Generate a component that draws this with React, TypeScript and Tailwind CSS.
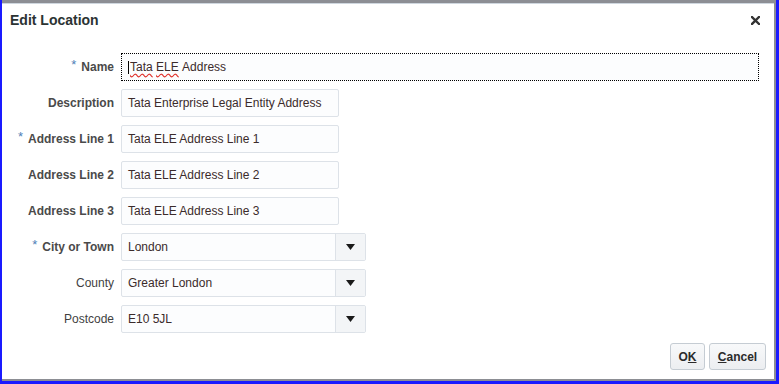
import React from 'react';

const font = { fontFamily: '"Liberation Sans", Arial, sans-serif' };

function Label({ text, required, bold = true }: { text: string; required?: boolean; bold?: boolean }) {
  return (
    <div className="w-[112px] flex items-center justify-end">
      {required && <span className="text-[#4d7fb8] text-[13px] leading-none mr-[5px] -mt-[6px]">*</span>}
      <span className={`text-[12px] ${bold ? 'font-bold text-[#4a4a4a]' : 'text-[#3f3f3f]'}`}>{text}</span>
    </div>
  );
}

function TextBox({ value, width = 'w-[218px]' }: { value: string; width?: string }) {
  return (
    <div className={`${width} h-[28px] border border-[#dde2e8] rounded-[2px] bg-[#fcfdfe] flex items-center pl-[6px] text-[12px] text-[#3b2b2b]`}>
      {value}
    </div>
  );
}

function SelectBox({ value }: { value: string }) {
  return (
    <div className="w-[245px] h-[28px] border border-[#dde2e8] rounded-[2px] bg-[#fcfdfe] flex items-center text-[12px] text-[#3b2b2b]">
      <div className="flex-1 pl-[6px]">{value}</div>
      <div className="w-[30px] h-full border-l border-[#dde2e8] bg-[#f3f5f7] flex items-center justify-center rounded-r-[2px]">
        <svg width="9" height="6" viewBox="0 0 9 6">
          <path d="M0 0 H9 L4.5 6 Z" fill="#1a1a1a" />
        </svg>
      </div>
    </div>
  );
}

function Row({ children }: { children: React.ReactNode }) {
  return <div className="flex items-center gap-[7px] h-[28px]">{children}</div>;
}

export default function App() {
  return (
    <div className="w-[779px] h-[384px] bg-[#1a1aff] pl-[2px] pr-[3px] pb-[3px]" style={font}>
      <div className="h-full bg-white border-t-[3px] border-r-[2px] border-b-[2px] border-[#8c8e94] flex flex-col">
        <div className="flex-1 flex flex-col border-t border-[#cfd7df]">
          {/* Title bar */}
          <div className="h-[33px] flex items-center justify-between pl-[8px] pr-[14px]">
            <span className="text-[14px] font-bold text-[#2b3333]">Edit Location</span>
            <svg width="9" height="9" viewBox="0 0 9 9">
              <path d="M1 1 L8 8 M8 1 L1 8" stroke="#333" strokeWidth="2.4" strokeLinecap="square" />
            </svg>
          </div>

          {/* Form */}
          <div className="mt-[16px] flex flex-col gap-[8px]">
            <Row>
              <Label text="Name" required />
              <div className="w-[638px] h-[28px] border border-dotted border-black bg-[#fcfdfe] flex items-center pl-[6px] text-[12px] text-[#3b2b2b]">
                <span className="w-px h-[13px] bg-black mr-[1px]" />
                <span className="underline decoration-wavy decoration-[#e0302a] underline-offset-2">Tata</span>
                <span>&nbsp;</span>
                <span className="underline decoration-wavy decoration-[#e0302a] underline-offset-2">ELE</span>
                <span>&nbsp;Address</span>
              </div>
            </Row>
            <Row>
              <Label text="Description" />
              <TextBox value="Tata Enterprise Legal Entity Address" />
            </Row>
            <Row>
              <Label text="Address Line 1" required />
              <TextBox value="Tata ELE Address Line 1" />
            </Row>
            <Row>
              <Label text="Address Line 2" />
              <TextBox value="Tata ELE Address Line 2" />
            </Row>
            <Row>
              <Label text="Address Line 3" />
              <TextBox value="Tata ELE Address Line 3" />
            </Row>
            <Row>
              <Label text="City or Town" required />
              <SelectBox value="London" />
            </Row>
            <Row>
              <Label text="County" bold={false} />
              <SelectBox value="Greater London" />
            </Row>
            <Row>
              <Label text="Postcode" bold={false} />
              <SelectBox value="E10 5JL" />
            </Row>
          </div>

          {/* Buttons */}
          <div className="mt-[10px] flex justify-end gap-[4px] pr-[8px]">
            <button className="w-[35px] h-[27px] border border-[#c5ccd3] rounded-[3px] bg-gradient-to-b from-[#f8f9fa] to-[#eceef1] text-[12px] font-bold text-[#2b2b2b]">
              O<span className="underline">K</span>
            </button>
            <button className="w-[57px] h-[27px] border border-[#c5ccd3] rounded-[3px] bg-gradient-to-b from-[#f8f9fa] to-[#eceef1] text-[12px] font-bold text-[#2b2b2b]">
              <span className="underline">C</span>ancel
            </button>
          </div>
        </div>
      </div>
    </div>
  );
}
